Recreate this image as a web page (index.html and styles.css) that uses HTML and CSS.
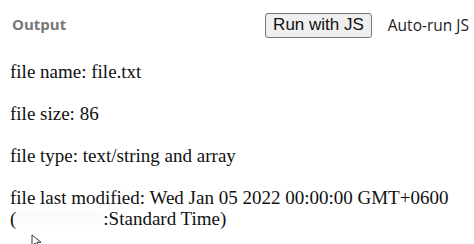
FILE: index.html
```html
<!DOCTYPE html>
<html>
<head>
<meta charset="utf-8">
<link rel="stylesheet" href="styles.css">
</head>
<body>
<div class="bar">
  <div class="title">Output</div>
  <div class="controls">
    <button class="run">Run with JS</button>
    <span class="auto">Auto-run JS</span>
  </div>
</div>
<div class="out">
  <p>file name: file.txt</p>
  <p>file size: 86</p>
  <p>file type: text/string and array</p>
  <p>file last modified: Wed Jan 05 2022 00:00:00 GMT+0600 <span class="nw">(<span class="blur"></span>:Standard</span> Time)</p>
</div>
<svg class="cursor" width="12" height="14" viewBox="0 0 12 14"><path d="M1 1 L1 12 L4 9 L6.5 14 L8 13 L5.8 8.3 L10 8.3 Z" fill="#fff" stroke="#333" stroke-width="1"/></svg>
</body>
</html>
```
FILE: styles.css
```css
html, body { margin: 0; padding: 0; background: #fff; overflow: hidden; }
body { width: 474px; height: 244px; position: relative; }
.bar {
  display: flex;
  justify-content: space-between;
  align-items: center;
  height: 48px;
  padding: 0 5px 0 12px;
}
.title {
  font-family: "Open Sans", sans-serif;
  font-weight: 700;
  font-size: 15px;
  color: #777;
}
.controls { display: flex; align-items: center; gap: 16px; margin-top: 2px; }
.run {
  font-family: "Liberation Sans", Arial, sans-serif;
  font-size: 17px;
  color: #111;
  background: #efefef;
  border: 1px solid #767676;
  border-radius: 3px;
  padding: 1px 7px;
  height: 25px;
  line-height: 20px;
}
.auto {
  font-family: "Open Sans", sans-serif;
  font-size: 15.5px;
  color: #222;
}
.out {
  padding: 13px 10px 0;
  font-family: "Liberation Serif", "Times New Roman", serif;
  font-size: 19px;
  line-height: 21px;
  color: #111;
}
.out p { margin: 0 0 21px 0; }
.nw { white-space: nowrap; }
.blur { display: inline-block; width: 87px; height: 14px; background: #fbfbfb; }
.cursor { position: absolute; left: 31px; top: 234px; }
```
